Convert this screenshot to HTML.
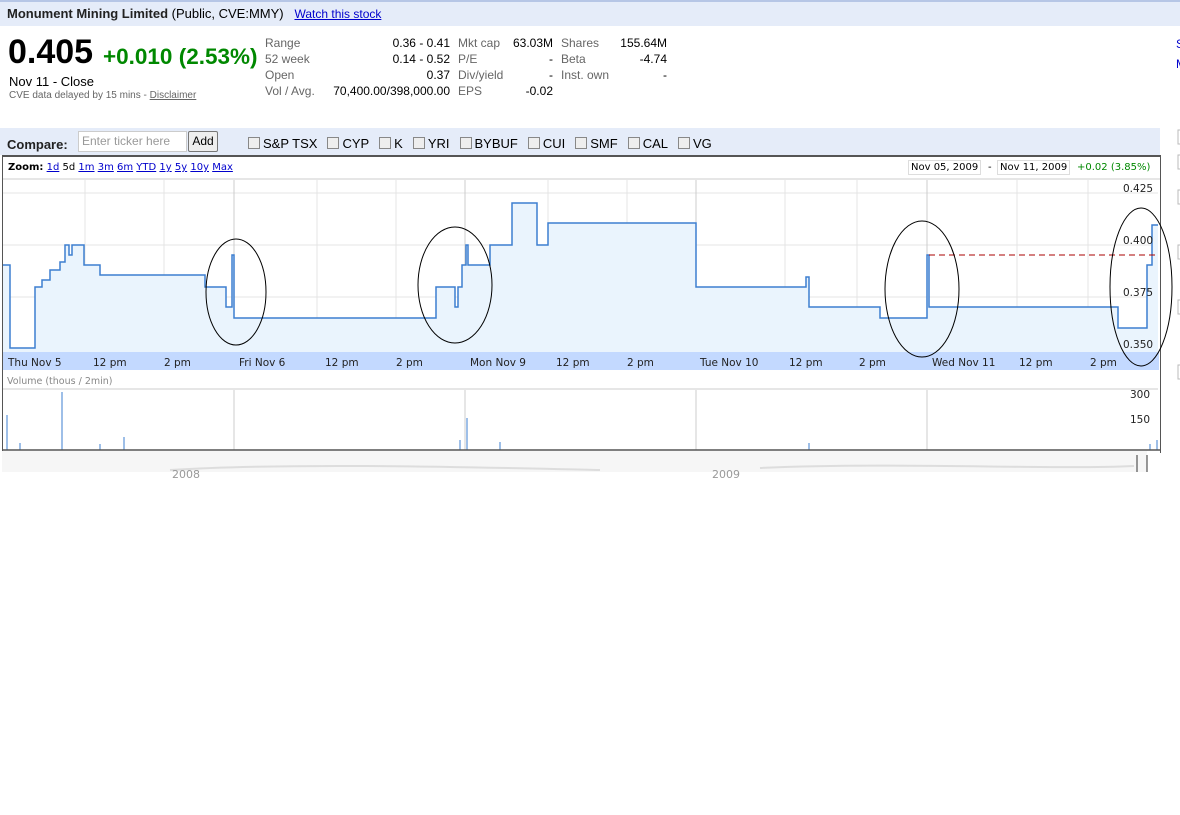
<!DOCTYPE html>
<html><head><style>
body{margin:0;width:1180px;height:815px;background:#fff;font-family:"Liberation Sans",Arial,sans-serif;position:relative;overflow:hidden}
.a{position:absolute;white-space:nowrap}
.top{left:0;top:0;width:1180px;height:24px;background:#e5ecf9;border-top:2px solid #b6c6e6}
.k{font-size:12px;color:#666}
.v{font-size:12px;color:#000;text-align:right}
a{color:#00c}
.ln{font-family:"DejaVu Sans",sans-serif;font-size:10px}
.cb{display:inline-block;width:10px;height:10px;border:1px solid #888;background:#eee;vertical-align:-1px;margin:0 3px 0 10px}
</style></head><body>
<div class="a top"></div>
<div class="a" style="left:7px;top:6px;font-size:13px"><b style="color:#222">Monument Mining Limited</b> (Public, CVE:MMY) &nbsp;&nbsp;<a href="#" style="font-size:12px">Watch this stock</a></div>
<div class="a" style="left:8px;top:33px;font-size:34px;font-weight:bold">0.405</div>
<div class="a" style="left:103px;top:44px;font-size:22.5px;font-weight:bold;color:#080">+0.010 (2.53%)</div>
<div class="a" style="left:9px;top:74px;font-size:13px">Nov 11 - Close</div>
<div class="a" style="left:9px;top:90px;font-size:10px;color:#666">CVE data delayed by 15 mins - <u>Disclaimer</u></div>
<div class="a k" style="left:265px;top:35px;line-height:16px">Range<br>52 week<br>Open<br>Vol / Avg.</div>
<div class="a v" style="left:320px;width:130px;top:35px;line-height:16px">0.36 - 0.41<br>0.14 - 0.52<br>0.37<br>70,400.00/398,000.00</div>
<div class="a k" style="left:458px;top:35px;line-height:16px">Mkt cap<br>P/E<br>Div/yield<br>EPS</div>
<div class="a v" style="left:500px;width:53px;top:35px;line-height:16px">63.03M<br>-<br>-<br>-0.02</div>
<div class="a k" style="left:561px;top:35px;line-height:16px">Shares<br>Beta<br>Inst. own</div>
<div class="a v" style="left:610px;width:57px;top:35px;line-height:16px">155.64M<br>-4.74<br>-</div>
<div class="a" style="left:0;top:128px;width:1160px;height:27px;background:#e5ecf9"></div>
<div class="a" style="left:7px;top:137px;font-size:13px;font-weight:bold;color:#222">Compare:</div>
<div class="a" style="left:78px;top:131px;width:104px;height:19px;border:1px solid #ccc;background:#fff;font-size:12px;color:#999;line-height:19px;padding-left:3px">Enter ticker here</div>
<div class="a" style="left:188px;top:131px;width:28px;height:19px;border:1px solid #777;background:#eee;font-size:12px;text-align:center;line-height:19px;border-radius:2px">Add</div>
<div class="a" style="left:238px;top:136px;font-size:13px"><span class="cb"></span>S&amp;P TSX<span class="cb"></span>CYP<span class="cb"></span>K<span class="cb"></span>YRI<span class="cb"></span>BYBUF<span class="cb"></span>CUI<span class="cb"></span>SMF<span class="cb"></span>CAL<span class="cb"></span>VG</div>
<div class="a" style="left:2px;top:155px;width:1157px;height:296px;border:1px solid #555;border-bottom:none;border-top-width:2px"></div>
<div class="a ln" style="left:8px;top:162px"><b>Zoom:</b> <a href="#">1d</a> 5d <a href="#">1m</a> <a href="#">3m</a> <a href="#">6m</a> <a href="#">YTD</a> <a href="#">1y</a> <a href="#">5y</a> <a href="#">10y</a> <a href="#">Max</a></div>
<div class="a ln" style="left:908px;top:160px;border:1px solid #ddd;padding:1px 2px">Nov 05, 2009</div>
<div class="a ln" style="left:988px;top:162px">-</div>
<div class="a ln" style="left:997px;top:160px;border:1px solid #ddd;padding:1px 2px">Nov 11, 2009</div>
<div class="a ln" style="left:1077px;top:162px;color:#080">+0.02 (3.85%)</div>
<svg class="a" style="left:0;top:0" width="1180" height="480">
<line x1="3" y1="179" x2="1160" y2="179" stroke="#ccc"/>
<g stroke="#e4e4e4"><line x1="3" y1="193" x2="1158" y2="193"/><line x1="3" y1="245" x2="1158" y2="245"/><line x1="3" y1="297" x2="1158" y2="297"/><line x1="3" y1="349" x2="1158" y2="349"/>
<line x1="85" y1="180" x2="85" y2="352"/><line x1="164" y1="180" x2="164" y2="352"/><line x1="317" y1="180" x2="317" y2="352"/><line x1="396" y1="180" x2="396" y2="352"/><line x1="548" y1="180" x2="548" y2="352"/><line x1="627" y1="180" x2="627" y2="352"/><line x1="785" y1="180" x2="785" y2="352"/><line x1="857" y1="180" x2="857" y2="352"/><line x1="1017" y1="180" x2="1017" y2="352"/><line x1="1088" y1="180" x2="1088" y2="352"/></g>
<g stroke="#ccc"><line x1="234" y1="180" x2="234" y2="352"/><line x1="465" y1="180" x2="465" y2="352"/><line x1="696" y1="180" x2="696" y2="352"/><line x1="927" y1="180" x2="927" y2="352"/>
<line x1="234" y1="390" x2="234" y2="450"/><line x1="465" y1="390" x2="465" y2="450"/><line x1="696" y1="390" x2="696" y2="450"/><line x1="927" y1="390" x2="927" y2="450"/></g>
<path d="M3,265H10V348H35V287H42V280H50V270H60V262H65V245H69V255H72V245H84V265H100V275H205V287H226V307H232V255H234V318H436V287H455V307H458V287H462V265H466V245H468V265H490V245H512V203H537V245H548V223H696V287H806V277H809V307H880V318H927V255H929V307H1118V328H1147V265H1152V225H1158V352H3Z" fill="#eaf4fd"/>
<path d="M3,265H10V348H35V287H42V280H50V270H60V262H65V245H69V255H72V245H84V265H100V275H205V287H226V307H232V255H234V318H436V287H455V307H458V287H462V265H466V245H468V265H490V245H512V203H537V245H548V223H696V287H806V277H809V307H880V318H927V255H929V307H1118V328H1147V265H1152V225H1158" fill="none" stroke="#3d7fd0" stroke-width="1.5"/>
<line x1="929" y1="255" x2="1157" y2="255" stroke="#a00" stroke-dasharray="6,4"/>
<rect x="3" y="352" width="1156" height="18" fill="#c3d9ff"/>
<g font-family="DejaVu Sans" font-size="10.5" fill="#222"><text x="8" y="366">Thu Nov 5</text><text x="93" y="366">12 pm</text><text x="164" y="366">2 pm</text><text x="239" y="366">Fri Nov 6</text><text x="325" y="366">12 pm</text><text x="396" y="366">2 pm</text><text x="470" y="366">Mon Nov 9</text><text x="556" y="366">12 pm</text><text x="627" y="366">2 pm</text><text x="700" y="366">Tue Nov 10</text><text x="789" y="366">12 pm</text><text x="859" y="366">2 pm</text><text x="932" y="366">Wed Nov 11</text><text x="1019" y="366">12 pm</text><text x="1090" y="366">2 pm</text>
<text x="1123" y="192">0.425</text><text x="1123" y="244">0.400</text><text x="1123" y="296">0.375</text><text x="1123" y="348">0.350</text>
<text x="1130" y="398">300</text><text x="1130" y="423">150</text><text x="7" y="384" fill="#888" font-size="9.5">Volume (thous / 2min)</text></g>
<line x1="3" y1="389" x2="1158" y2="389" stroke="#ccc"/>
<g stroke="#3d7fd0"><line x1="7" y1="450" x2="7" y2="415"/><line x1="62" y1="450" x2="62" y2="392"/><line x1="124" y1="450" x2="124" y2="437"/><line x1="467" y1="450" x2="467" y2="418"/><line x1="20" y1="450" x2="20" y2="443"/><line x1="100" y1="450" x2="100" y2="444"/><line x1="460" y1="450" x2="460" y2="440"/><line x1="500" y1="450" x2="500" y2="442"/><line x1="809" y1="450" x2="809" y2="443"/><line x1="1150" y1="450" x2="1150" y2="444"/><line x1="1157" y1="450" x2="1157" y2="440"/></g>
<line x1="2" y1="450" x2="1160" y2="450" stroke="#555" stroke-width="1.5"/>
<rect x="2" y="451" width="1145" height="21" fill="#f6f6f6"/>
<path d="M170,470 C300,462 500,468 600,470 M760,468 C900,462 1050,470 1134,466" stroke="#ddd" fill="none" stroke-width="2"/>
<text x="172" y="478" font-size="11" fill="#999" font-family="DejaVu Sans">2008</text><text x="712" y="478" font-size="11" fill="#999" font-family="DejaVu Sans">2009</text>
<line x1="1137" y1="455" x2="1137" y2="472" stroke="#333"/><line x1="1147" y1="455" x2="1147" y2="472" stroke="#333"/>
<g fill="none" stroke="#000"><ellipse cx="236" cy="292" rx="30" ry="53"/><ellipse cx="455" cy="285" rx="37" ry="58"/><ellipse cx="922" cy="289" rx="37" ry="68"/><ellipse cx="1141" cy="287" rx="31" ry="79"/></g>
<g stroke="#bbb" fill="none"><rect x="1178" y="130" width="4" height="14"/><rect x="1178" y="155" width="4" height="14"/><rect x="1178" y="190" width="4" height="14"/><rect x="1178" y="245" width="4" height="14"/><rect x="1178" y="300" width="4" height="14"/><rect x="1178" y="365" width="4" height="14"/></g>
<text x="1176" y="48" font-size="12" fill="#00c">S</text><text x="1176" y="68" font-size="12" fill="#00c">M</text>
</svg>
</body></html>
